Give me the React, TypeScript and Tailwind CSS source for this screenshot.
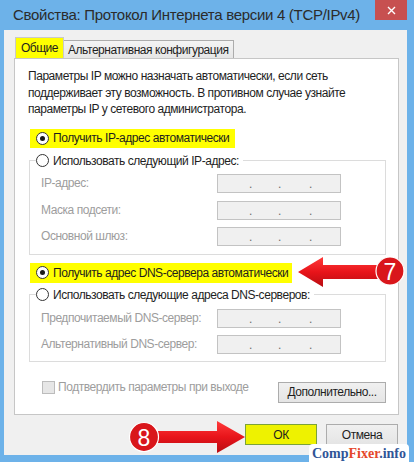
import React from "react";

const ui = "font-['Liberation_Sans',Arial,sans-serif]";

function Radio({ checked }: { checked?: boolean }) {
  return (
    <span className="flex h-[13px] w-[13px] shrink-0 items-center justify-center rounded-full border border-[#333333] bg-white">
      {checked && <span className="h-[5px] w-[5px] rounded-full bg-[#1a1a1a]" />}
    </span>
  );
}

function IpBox() {
  return (
    <div className="flex h-[19px] w-[124px] items-end border border-[#c3c3c3] bg-[#f0f0f0] pb-[2px] text-[12px] leading-[12px] text-[#6d6d6d]">
      <span className="w-[31px]" />
      <span className="w-[4px]">.</span>
      <span className="w-[25px]" />
      <span className="w-[4px]">.</span>
      <span className="w-[27px]" />
      <span className="w-[4px]">.</span>
    </div>
  );
}

function FieldRow({ label, className }: { label: string; className?: string }) {
  return (
    <div className={`flex items-center ${className ?? ""}`}>
      <span className="w-[176px] whitespace-nowrap text-[#9d9d9d]">{label}</span>
      <IpBox />
    </div>
  );
}

function WinButton({ children, className }: { children: React.ReactNode; className?: string }) {
  return (
    <button
      type="button"
      className={`flex h-[21px] items-center justify-center whitespace-nowrap border text-[12px] tracking-[-0.45px] text-[#1e1e1e] ${className ?? ""}`}
    >
      {children}
    </button>
  );
}

export default function App() {
  return (
    <div className={`relative flex h-[462px] w-[414px] flex-col overflow-hidden bg-[#6db2e9] ${ui}`}>
      {/* title bar */}
      <div className="flex h-[30px] shrink-0 items-start">
        <span className="whitespace-nowrap pl-[13px] pt-[5px] text-[15px] leading-[20px] tracking-[-0.3px] text-[#2b2b2b]">
          Свойства: Протокол Интернета версии 4 (TCP/IPv4)
        </span>
        <div className="ml-auto mr-[7px] flex h-[20px] w-[32px] shrink-0 items-center justify-center bg-[#c75050]">
          <svg width="9" height="9" viewBox="0 0 9 9">
            <path d="M1 1 L8 8 M8 1 L1 8" stroke="#fff" strokeWidth="1.4" />
          </svg>
        </div>
      </div>

      {/* client area */}
      <div className="ml-[4px] mr-[7px] flex h-[425px] flex-col bg-[#f0f0f0] text-[12px] tracking-[-0.45px]">
        <div className="pl-[10px] pt-[8px]">
          {/* tabs */}
          <div className="flex h-[20px] items-end pl-[1px]">
            <div className="flex h-[21px] w-[49px] items-center justify-center border border-b-0 border-[#c9c9c9] bg-[#ffff00] text-[#1e1e1e]">
              Общие
            </div>
            <div className="flex h-[18px] items-center whitespace-nowrap border border-b-0 border-l-0 border-[#acacac] bg-gradient-to-b from-[#f4f4f4] to-[#e6e6e6] px-[4px] text-[#1e1e1e]">
              Альтернативная конфигурация
            </div>
          </div>

          {/* tab page */}
          <div className="flex h-[357px] w-[385px] flex-col border border-[#c6c6c6] bg-white text-[#1e1e1e]">
            <p className="whitespace-nowrap pl-[13px] pt-[9px] leading-[16.5px]">
              Параметры IP можно назначать автоматически, если сеть
              <br />
              поддерживает эту возможность. В противном случае узнайте
              <br />
              параметры IP у сетевого администратора.
            </p>

            <div className="ml-[15px] mt-[11px] flex h-[19px] w-[205px] items-center gap-[4px] whitespace-nowrap bg-[#ffff00] pl-[6px]">
              <Radio checked />
              <span>Получить IP-адрес автоматически</span>
            </div>

            <fieldset className="ml-[14px] mt-[4px] w-[357px] border border-[#dcdcdc] pb-[8px] pl-[11px]">
              <legend className="-ml-[5px] flex h-[18px] items-center gap-[4px] whitespace-nowrap bg-white pr-[4px]">
                <Radio />
                <span>Использовать следующий IP-адрес:</span>
              </legend>
              <FieldRow label="IP-адрес:" className="mt-[4px]" />
              <FieldRow label="Маска подсети:" className="mt-[8px]" />
              <FieldRow label="Основной шлюз:" className="mt-[7px]" />
            </fieldset>

            <div className="ml-[15px] mt-[8px] flex h-[20px] w-[262px] items-center gap-[4px] whitespace-nowrap bg-[#ffff00] pl-[6px]">
              <Radio checked />
              <span>Получить адрес DNS-сервера автоматически</span>
            </div>

            <fieldset className="ml-[14px] mt-[3px] w-[357px] border border-[#dcdcdc] pb-[7px] pl-[11px]">
              <legend className="-ml-[5px] flex h-[18px] items-center gap-[4px] whitespace-nowrap bg-white pr-[4px]">
                <Radio />
                <span>Использовать следующие адреса DNS-серверов:</span>
              </legend>
              <FieldRow label="Предпочитаемый DNS-сервер:" className="mt-[5px]" />
              <FieldRow label="Альтернативный DNS-сервер:" className="mt-[7px]" />
            </fieldset>

            <div className="mt-[19px] flex items-start">
              <label className="ml-[27px] flex h-[13px] items-center gap-[3px] whitespace-nowrap text-[#9d9d9d]">
                <span className="h-[13px] w-[13px] border border-[#bcbcbc] bg-[#e6e6e6]" />
                Подтвердить параметры при выходе
              </label>
              <WinButton className="ml-auto mr-[12px] mt-[1px] w-[108px] border-[#acacac] bg-gradient-to-b from-[#f0f0f0] to-[#e5e5e5]">
                Дополнительно...
              </WinButton>
            </div>
          </div>
        </div>

        {/* dialog buttons */}
        <div className="mt-[9px] flex justify-end gap-[9px] pr-[9px]">
          <WinButton className="w-[72px] border-[#7ba23a] bg-[#eef200]">ОК</WinButton>
          <WinButton className="w-[72px] border-[#acacac] bg-gradient-to-b from-[#f0f0f0] to-[#e5e5e5]">
            Отмена
          </WinButton>
        </div>
      </div>

      {/* annotations */}
      <svg className="pointer-events-none absolute left-0 top-0" width="414" height="462">
        <defs>
          <linearGradient id="red" x1="0" y1="0" x2="0" y2="1">
            <stop offset="0" stopColor="#ff3b3b" />
            <stop offset="0.5" stopColor="#e8141a" />
            <stop offset="1" stopColor="#b80d12" />
          </linearGradient>
        </defs>
        <path
          d="M298 272 L323 257 L323 265 L378 265 L378 279 L323 279 L323 287 Z"
          fill="url(#red)"
        />
        <circle cx="390" cy="271" r="14" fill="#d9161b" stroke="#fff" strokeWidth="1.2" />
        <text x="390" y="279.5" textAnchor="middle" fontSize="23" fill="#fff" fontFamily="Liberation Sans, Arial, sans-serif">
          7
        </text>
        <path
          d="M245 437 L217 421 L217 431 L150 431 L150 443 L217 443 L217 453 Z"
          fill="url(#red)"
        />
        <circle cx="144" cy="437" r="14.5" fill="#d9161b" stroke="#fff" strokeWidth="1.2" />
        <text x="144" y="445.5" textAnchor="middle" fontSize="23" fill="#fff" fontFamily="Liberation Sans, Arial, sans-serif">
          8
        </text>
      </svg>

      <div className="absolute bottom-0 right-[5px] rounded-t-[4px] bg-white px-[3px] pt-[1px] font-['Liberation_Serif',serif] text-[14px] font-bold leading-[17px] text-[#2f5597]">
        Comp<span className="text-[#e5482c]">Fixer</span>.info
      </div>
    </div>
  );
}
